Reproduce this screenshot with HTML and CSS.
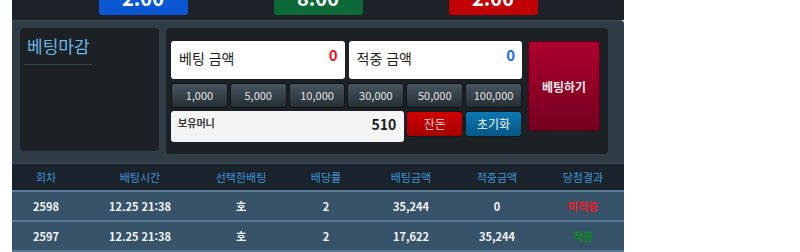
FILE: index.html
```html
<!DOCTYPE html>
<html lang="ko">
<head>
<meta charset="utf-8">
<title>베팅</title>
<link rel="stylesheet" href="styles.css">
</head>
<body>
<div class="wrap">
  <div class="odds">
    <div class="odd odd-blue">2.00</div>
    <div class="odd odd-green">8.00</div>
    <div class="odd odd-red">2.00</div>
  </div>
  <div class="panel">
    <div class="closed">
      <div class="closed-title">베팅마감</div>
    </div>
    <div class="betbox">
      <div class="betmain">
        <div class="amounts">
          <div class="amount"><span class="amt-label">베팅 금액</span><span class="amt-val val-red">0</span></div>
          <div class="amount"><span class="amt-label">적중 금액</span><span class="amt-val val-blue">0</span></div>
        </div>
        <div class="grid6 chips">
          <button class="chip">1,000</button>
          <button class="chip">5,000</button>
          <button class="chip">10,000</button>
          <button class="chip">30,000</button>
          <button class="chip">50,000</button>
          <button class="chip">100,000</button>
        </div>
        <div class="grid6 money-row">
          <div class="money"><span class="money-label">보유머니</span><span class="money-val">510</span></div>
          <button class="act act-change">잔돈</button>
          <button class="act act-reset">초기화</button>
        </div>
      </div>
      <button class="bet">베팅하기</button>
    </div>
  </div>
  <div class="table">
    <div class="trow thead">
      <div>회차</div><div>배팅시간</div><div>선택한배팅</div><div>배당률</div><div>배팅금액</div><div>적중금액</div><div>당첨결과</div>
    </div>
    <div class="trow tbody">
      <div>2598</div><div>12.25 21:38</div><div>호</div><div>2</div><div>35,244</div><div>0</div><div class="res-lose">미적중</div>
    </div>
    <div class="trow tbody">
      <div>2597</div><div>12.25 21:38</div><div>호</div><div>2</div><div>17,622</div><div>35,244</div><div class="res-win">적중</div>
    </div>
  </div>
</div>
</body>
</html>
```
FILE: styles.css
```css
* { box-sizing: border-box; }
html, body { margin: 0; padding: 0; background: #ffffff; }
body { font-family: "Noto Sans CJK KR", "Noto Sans", sans-serif; overflow: hidden; }

.wrap { width: 612px; margin-left: 12px; }

.odds {
  height: 20px;
  overflow: hidden;
  background: #1c2227;
  display: flex;
  justify-content: center;
  align-items: flex-end;
  gap: 86px;
  padding-bottom: 5px;
}
.odd {
  flex: 0 0 89px;
  height: 40px;
  border-radius: 3px;
  color: #ffffff;
  font-weight: bold;
  font-size: 20px;
  line-height: 20px;
  display: flex;
  align-items: flex-end;
  justify-content: center;
  padding-bottom: 7px;
}
.odd-blue { background: #0b57d3; }
.odd-green { background: #0b6a36; }
.odd-red { background: #c10000; }

.panel {
  background: #2f3b45;
  border-top: 1px solid #3a4752;
  border-bottom: 1px solid #3a4752;
  border-top-right-radius: 4px;
  height: 144px;
  padding: 7px 15px 9px 8px;
  display: flex;
  align-items: flex-start;
  gap: 7px;
}
.closed {
  width: 139px;
  height: 123px;
  background: #1c2126;
  border-radius: 4px;
  padding-top: 5px;
}
.closed-title {
  margin-left: 4px;
  width: 68px;
  padding: 0 2px 6px 3px;
  border-bottom: 1px solid #3a4550;
  color: #6cb6e2;
  font-size: 17px;
  line-height: 25px;
  white-space: nowrap;
}

.betbox {
  width: 442px;
  height: 126px;
  background: #1c2126;
  border-radius: 4px;
  padding: 13px 8px 12px 5px;
  display: flex;
  align-items: flex-start;
  gap: 6px;
}
.betmain { width: 351px; }

.amounts { display: flex; gap: 4px; height: 38px; }
.amount {
  flex: 1;
  background: #ffffff;
  border-radius: 3px;
  display: flex;
  justify-content: space-between;
  align-items: flex-start;
  padding: 4px 7px 0 8px;
}
.amt-label { font-size: 14px; line-height: 26px; color: #222222; }
.amt-val { font-size: 15px; line-height: 20px; font-weight: bold; }
.val-red { color: #e8141c; }
.val-blue { color: #1f6fe0; }

.grid6 { display: grid; grid-template-columns: repeat(6, 1fr); gap: 2px; }
.chips { margin-top: 4px; height: 25px; }
.chip {
  font-family: inherit;
  font-size: 11px;
  color: #e2e4e6;
  background: linear-gradient(#48555f, #252e35);
  border: 1px solid #0f1317;
  border-radius: 3px;
  padding: 0;
  line-height: 23px;
}

.money-row { margin-top: 3px; align-items: start; }
.money {
  grid-column: span 4;
  height: 31px;
  background: #f4f4f4;
  border-radius: 3px;
  display: flex;
  justify-content: space-between;
  align-items: flex-start;
  padding: 4px 8px 0 7px;
}
.money-label { font-size: 10px; line-height: 14px; font-weight: bold; color: #333333; margin-top: 1px; }
.money-val { font-size: 14px; line-height: 18px; font-weight: bold; color: #1a1a1a; }
.act {
  height: 26px;
  font-family: inherit;
  font-size: 12px;
  border-radius: 3px;
  padding: 0;
  line-height: 24px;
  border: 1px solid #14181c;
}
.act-change { background: linear-gradient(#d00000, #a40000); color: #f6d6d6; }
.act-reset { background: linear-gradient(#0c78b4, #075783); color: #f2f6fa; }

.bet {
  width: 72px;
  height: 90px;
  font-family: inherit;
  font-size: 12px;
  font-weight: bold;
  color: #f6e8ea;
  background: linear-gradient(#ad002e, #74001f);
  border: 1px solid #5c0018;
  border-radius: 3px;
  padding: 0;
}

.table { border-bottom: 2px solid #587a90; }
.trow {
  display: grid;
  grid-template-columns: 68px 120px 82px 88px 82px 90px 82px;
  align-items: center;
  text-align: center;
  font-size: 11px;
}
.thead { height: 26px; background: #1a232b; color: #3e95d8; }
.tbody {
  height: 30px;
  border-top: 2px solid #587a90;
  background: #37536a;
  color: #f2f4f6;
  font-weight: bold;
}
.res-lose { color: #ee1c24; }
.res-win { color: #0c8a1c; }
```
